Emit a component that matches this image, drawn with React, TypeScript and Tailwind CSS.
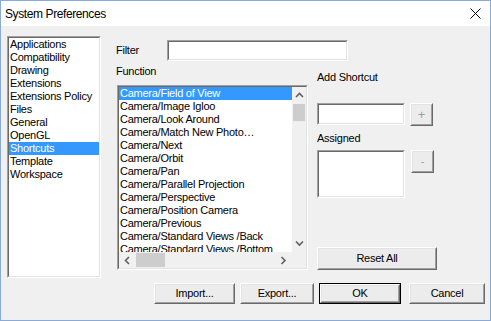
import type { ReactNode } from 'react';

const categories = [
  'Applications',
  'Compatibility',
  'Drawing',
  'Extensions',
  'Extensions Policy',
  'Files',
  'General',
  'OpenGL',
  'Shortcuts',
  'Template',
  'Workspace',
];

const functions = [
  'Camera/Field of View',
  'Camera/Image Igloo',
  'Camera/Look Around',
  'Camera/Match New Photo…',
  'Camera/Next',
  'Camera/Orbit',
  'Camera/Pan',
  'Camera/Parallel Projection',
  'Camera/Perspective',
  'Camera/Position Camera',
  'Camera/Previous',
  'Camera/Standard Views /Back',
  'Camera/Standard Views /Bottom',
];

const Sunken = ({ className = '', children }: { className?: string; children?: ReactNode }) => (
  <div className={`border border-t-[#a0a0a0] border-l-[#a0a0a0] border-b-white border-r-white ${className}`}>
    <div className="w-full h-full border border-t-[#696969] border-l-[#696969] border-b-[#e3e3e3] border-r-[#e3e3e3] bg-white overflow-hidden">
      {children}
    </div>
  </div>
);

const Button = ({
  className = '',
  disabled = false,
  children,
}: {
  className?: string;
  disabled?: boolean;
  children?: ReactNode;
}) => (
  <div className={`border border-t-white border-l-white border-b-[#696969] border-r-[#696969] ${className}`}>
    <div
      className={`w-full h-full border border-t-[#e3e3e3] border-l-[#e3e3e3] border-b-[#a0a0a0] border-r-[#a0a0a0] bg-[#ececec] flex items-center justify-center ${
        disabled ? 'text-[#a0a0a0]' : 'text-black'
      }`}
    >
      {children}
    </div>
  </div>
);

const Chevron = ({ dir }: { dir: 'up' | 'down' | 'left' | 'right' }) => {
  const pts = {
    up: '1,5 4.5,1.5 8,5',
    down: '1,1.5 4.5,5 8,1.5',
    left: '5,1 1.5,4.5 5,8',
    right: '1.5,1 5,4.5 1.5,8',
  }[dir];
  const vertical = dir === 'up' || dir === 'down';
  return (
    <svg width={vertical ? 9 : 7} height={vertical ? 7 : 9} viewBox={vertical ? '0 0 9 7' : '0 0 7 9'}>
      <polyline points={pts} fill="none" stroke="#606060" strokeWidth="1.6" />
    </svg>
  );
};

export default function App() {
  return (
    <div
      className="w-[491px] h-[321px] border border-[#8aaad8] bg-[#f0f0f0] flex flex-col text-[11px] tracking-[-0.25px] text-black"
      style={{ fontFamily: '"Liberation Sans", Arial, sans-serif' }}
    >
      {/* Title bar */}
      <div className="h-[25px] bg-white flex items-center justify-between pl-[4px] pr-[9px]">
        <span className="text-[12px] tracking-[-0.4px]">System Preferences</span>
        <svg width="11" height="11" viewBox="0 0 11 11">
          <path d="M0.5 0.5 L10.5 10.5 M10.5 0.5 L0.5 10.5" stroke="#000" strokeWidth="1" />
        </svg>
      </div>

      <div className="flex-1 flex flex-col">
        <div className="flex pt-[10px] pl-[6px]">
          {/* Category list */}
          <Sunken className="w-[94px] h-[242px]">
            {categories.map((c) => (
              <div
                key={c}
                className={`h-[13px] leading-[13px] pl-[1px] whitespace-nowrap ${
                  c === 'Shortcuts' ? 'bg-[#3399ff] text-white' : ''
                }`}
              >
                {c}
              </div>
            ))}
          </Sunken>

          <div className="ml-[15px] pt-[4px] flex flex-col">
            {/* Filter */}
            <div className="flex items-center h-[21px]">
              <span className="w-[51px]">Filter</span>
              <Sunken className="w-[181px] h-[21px]" />
            </div>

            <div className="flex mt-[4px]">
              {/* Function list */}
              <div className="w-[192px] flex flex-col">
                <div className="h-[13px] leading-[13px]">Function</div>
                <Sunken className="mt-[7px] ml-[1px] w-[191px] h-[185px]">
                  <div className="flex flex-col h-full">
                    <div className="flex flex-1 min-h-0">
                      <div className="flex-1 overflow-hidden">
                        {functions.map((f, i) => (
                          <div
                            key={f}
                            className={`h-[13px] leading-[13px] pl-[1px] whitespace-nowrap ${
                              i === 0 ? 'bg-[#3399ff] text-white' : ''
                            }`}
                          >
                            {f}
                          </div>
                        ))}
                      </div>
                      <div className="w-[14px] bg-[#f0f0f0] flex flex-col">
                        <div className="h-[17px] flex items-center justify-center">
                          <Chevron dir="up" />
                        </div>
                        <div className="h-[17px] mx-[1px] bg-[#cdcdcd]" />
                        <div className="flex-1" />
                        <div className="h-[17px] flex items-center justify-center">
                          <Chevron dir="down" />
                        </div>
                      </div>
                    </div>
                    <div className="h-[16px] bg-[#f0f0f0] flex">
                      <div className="w-[17px] flex items-center justify-center">
                        <Chevron dir="left" />
                      </div>
                      <div className="flex-1 py-[1px]">
                        <div className="w-[29px] h-full bg-[#cdcdcd]" />
                      </div>
                      <div className="w-[17px] flex items-center justify-center">
                        <Chevron dir="right" />
                      </div>
                      <div className="w-[14px]" />
                    </div>
                  </div>
                </Sunken>
              </div>

              {/* Shortcut editor */}
              <div className="ml-[9px] h-[205px] flex flex-col">
                <div className="mt-[6px] h-[13px] leading-[13px]">Add Shortcut</div>
                <div className="mt-[19px] flex items-start">
                  <Sunken className="w-[88px] h-[22px]" />
                  <Button disabled className="ml-[5px] w-[23px] h-[23px] text-[13px]">
                    +
                  </Button>
                </div>
                <div className="mt-[6px] h-[13px] leading-[13px]">Assigned</div>
                <div className="mt-[5px] flex items-start">
                  <Sunken className="w-[88px] h-[48px]" />
                  <Button disabled className="ml-[6px] w-[23px] h-[23px]">
                    -
                  </Button>
                </div>
                <Button className="mt-auto w-[120px] h-[23px]">Reset All</Button>
              </div>
            </div>
          </div>
        </div>

        {/* Dialog buttons */}
        <div className="mt-[5px] flex justify-end pr-[5px]">
          <Button className="w-[81px] h-[21px]">Import...</Button>
          <Button className="ml-[5px] w-[74px] h-[21px]">Export...</Button>
          <div className="ml-[5px] w-[82px] h-[21px] border border-black">
            <Button className="w-full h-full">OK</Button>
          </div>
          <Button className="ml-[8px] w-[76px] h-[21px]">Cancel</Button>
        </div>
      </div>
    </div>
  );
}
